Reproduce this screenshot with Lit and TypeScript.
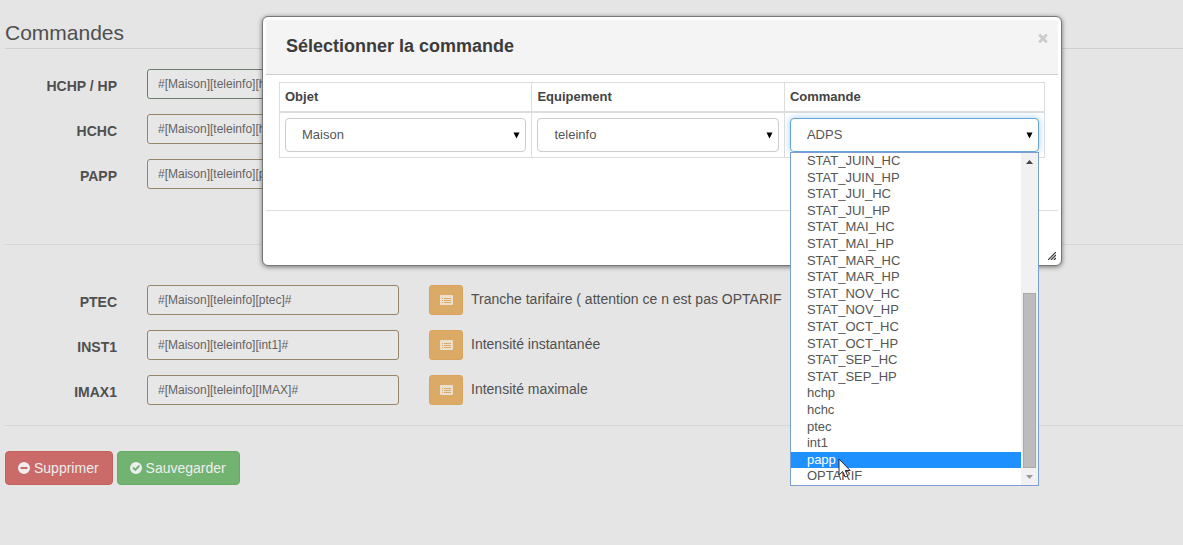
import { LitElement, html, css, svg, nothing } from "lit";
import { customElement, property, state } from "lit/decorators.js";
import { classMap } from "lit/directives/class-map.js";

interface Field {
  id: string;
  label: string;
  value: string;
  tone: string;
  hint: string;
}

const CONSUMPTION: Field[] = [
  { id: "hchp", label: "HCHP / HP", value: "#[Maison][teleinfo][hchp]#", tone: "ok", hint: "" },
  { id: "hchc", label: "HCHC", value: "#[Maison][teleinfo][hchc]#", tone: "warn", hint: "" },
  { id: "papp", label: "PAPP", value: "#[Maison][teleinfo][papp]#", tone: "warn", hint: "" },
];

const TARIFF: Field[] = [
  { id: "ptec", label: "PTEC", value: "#[Maison][teleinfo][ptec]#", tone: "warn", hint: "Tranche tarifaire ( attention ce n est pas OPTARIF" },
  { id: "inst1", label: "INST1", value: "#[Maison][teleinfo][int1]#", tone: "warn", hint: "Intensité instantanée" },
  { id: "imax1", label: "IMAX1", value: "#[Maison][teleinfo][IMAX]#", tone: "warn", hint: "Intensité maximale" },
];

const COMMANDS = [
  "STAT_JUIN_HC", "STAT_JUIN_HP", "STAT_JUI_HC", "STAT_JUI_HP", "STAT_MAI_HC",
  "STAT_MAI_HP", "STAT_MAR_HC", "STAT_MAR_HP", "STAT_NOV_HC", "STAT_NOV_HP",
  "STAT_OCT_HC", "STAT_OCT_HP", "STAT_SEP_HC", "STAT_SEP_HP", "hchp", "hchc",
  "ptec", "int1", "papp", "OPTARIF",
];

const listIcon = svg`<svg class="icon" viewBox="0 0 13 10" width="13" height="10" aria-hidden="true">
  <path fill="currentColor" fill-rule="evenodd" d="M1 0h11q1 0 1 1v8q0 1-1 1H1q-1 0-1-1V1q0-1 1-1zM2 3v1h1V3zM4 3v1h7V3zM2 5v1h1V5zM4 5v1h7V5zM2 7v1h1V7zM4 7v1h7V7z"/>
</svg>`;

const minusIcon = svg`<svg class="icon" viewBox="0 0 12 12" width="12" height="12" aria-hidden="true">
  <path fill="currentColor" fill-rule="evenodd" d="M6 0a6 6 0 1 1 0 12A6 6 0 0 1 6 0zM3 5q-.5 0-.5.5v1q0 .5.5.5h6q.5 0 .5-.5v-1Q9.500 5 9 5z"/>
</svg>`;

const checkIcon = svg`<svg class="icon" viewBox="0 0 12 12" width="12" height="12" aria-hidden="true">
  <path fill="currentColor" fill-rule="evenodd" d="M6 0a6 6 0 1 1 0 12A6 6 0 0 1 6 0zM2.300 6.200 5.300 9.200 10 4.500 8.600 3.100 5.300 6.400 3.700 4.800z"/>
</svg>`;

@customElement("command-row")
export class CommandRow extends LitElement {
  @property({ attribute: false }) field!: Field;

  static styles = css`
    :host { display: block; }
    .row {
      display: grid;
      grid-template-columns: 112px 252px 1fr;
      column-gap: 30px;
    }
    .label {
      padding-top: 7px;
      font-weight: 700;
      line-height: 20px;
      text-align: right;
    }
    .input {
      box-sizing: border-box;
      width: 100%;
      height: 30px;
      padding: 5px 10px;
      border: 1px solid #968567;
      border-radius: 3px;
      background: #e7e7e7;
      color: #636363;
      font: 12px/18px "Liberation Sans", Arial, sans-serif;
    }
    .ok { border-color: #6c7c6c; }
    .extra { display: flex; gap: 8px; }
    .pick {
      display: grid;
      place-items: center;
      width: 34px;
      height: 30px;
      padding: 0;
      border: 1px solid #dba45c;
      border-radius: 3px;
      background: #dcaa67;
      color: #ebe0cf;
    }
    .hint { padding-top: 4px; line-height: 20px; white-space: nowrap; }
  `;

  render() {
    const f = this.field;
    return html`<div class="row">
      <label class="label" for=${f.id}>${f.label}</label>
      <div><input class=${classMap({ input: true, ok: f.tone === "ok" })} id=${f.id} .value=${f.value} /></div>
      ${f.hint
        ? html`<div class="extra">
            <button class="pick" type="button" aria-label="Choisir ${f.label}">${listIcon}</button>
            <span class="hint">${f.hint}</span>
          </div>`
        : nothing}
    </div>`;
  }
}

@customElement("command-dialog")
export class CommandDialog extends LitElement {
  @state() private active = "papp";

  static styles = css`
    :host { display: block; }
    .dialog {
      position: relative;
      padding: 3px 3px 0;
      border: 1px solid #777;
      border-radius: 6px;
      background: #fff;
      box-shadow: 0 1px 5px rgba(0, 0, 0, 0.5);
      color: #444;
    }
    .header {
      display: flex;
      justify-content: space-between;
      padding: 14px 9px 16px 20px;
      border-bottom: 1px solid #ccc;
      background: #f4f4f4;
    }
    .title { margin: 0; font: 700 18px/24px "Liberation Sans", Arial, sans-serif; color: #3c3c3c; }
    .close {
      align-self: flex-start;
      display: grid;
      padding: 0;
      border: 0;
      background: none;
      color: #ccc;
    }
    .body { padding: 7px 13px 52px; }
    .table { width: 100%; border-collapse: collapse; table-layout: fixed; }
    .table th, .table td { box-sizing: border-box; border: 1px solid #ddd; padding: 5px; }
    .table th {
      padding: 4px 5px;
      border-bottom-width: 2px;
      font-size: 13px;
      line-height: 20px;
      text-align: left;
    }
    .table .last { width: 34%; }
    .field { position: relative; }
    .select {
      display: block;
      box-sizing: border-box;
      width: 100%;
      height: 34px;
      padding: 6px 16px;
      border: 1px solid #ccc;
      border-radius: 4px;
      appearance: none;
      background: #fff url("data:image/svg+xml,%3Csvg xmlns='http://www.w3.org/2000/svg' width='7' height='7'%3E%3Cpath d='M.5 .5h6l-3 6z'/%3E%3C/svg%3E") no-repeat right 5px center;
      color: #555;
      font: 13px/20px "Liberation Sans", Arial, sans-serif;
    }
    .open { border-color: #66a3d6; box-shadow: 0 0 7px rgba(102, 175, 233, 0.6); outline: none; }
    .menu {
      position: absolute;
      z-index: 2;
      top: 100%;
      left: 0;
      right: 0;
      display: grid;
      grid-template-columns: 1fr 17px;
      box-sizing: border-box;
      height: 334px;
      border: 1px solid #7b9fd3;
      background: #fff;
    }
    .list {
      display: grid;
      grid-auto-rows: 1fr;
      margin: 0;
      padding: 0;
      list-style: none;
      color: #555;
      font-size: 13px;
      line-height: 16px;
    }
    .option { padding-left: 16px; }
    .active { background: #1e90ff; color: #fff; }
    .scroll {
      display: grid;
      grid-template-rows: 140px 1fr 17px;
      background: #f1f1f1;
    }
    .arrow { justify-self: center; margin-top: 7px; }
    .thumb { margin: 0 2px; border: 1px solid #a9a9a9; background: #bcbcbc; }
    .pointer { position: absolute; left: 47px; top: 305px; }
    .footer { height: 54px; border-top: 1px solid #ddd; }
    .grip { position: absolute; right: 5px; bottom: 5px; }
  `;

  render() {
    return html`<section class="dialog" role="dialog" aria-labelledby="title">
      <header class="header">
        <h2 class="title" id="title">Sélectionner la commande</h2>
        <button class="close" type="button" aria-label="Fermer">
          <svg viewBox="0 0 12 9" width="12" height="9"><path d="M2.200 .5l7.600 8m0-8l-7.600 8" stroke="currentColor" stroke-width="2.800"/></svg>
        </button>
      </header>
      <div class="body">
        <table class="table">
          <thead>
            <tr><th id="h-objet">Objet</th><th id="h-equip">Equipement</th><th class="last" id="h-cmd">Commande</th></tr>
          </thead>
          <tbody>
            <tr>
              <td><select class="select" aria-labelledby="h-objet"><option>Maison</option></select></td>
              <td><select class="select" aria-labelledby="h-equip"><option>teleinfo</option></select></td>
              <td>
                <div class="field">
                  <select class="select open" aria-labelledby="h-cmd"><option>ADPS</option></select>
                  <div class="menu">
                    <ul class="list" role="listbox" aria-labelledby="h-cmd">
                      ${COMMANDS.map((c) => html`<li
                        class=${classMap({ option: true, active: c === this.active })}
                        role="option"
                        aria-selected=${c === this.active}
                        @mouseenter=${() => (this.active = c)}
                      >${c}</li>`)}
                    </ul>
                    <div class="scroll" aria-hidden="true">
                      <svg class="arrow" width="7" height="4"><path d="M0 4l3.500-4L7 4z" fill="#444"/></svg>
                      <div class="thumb"></div>
                      <svg class="arrow" width="7" height="4"><path d="M0 0l3.500 4L7 0z" fill="#999"/></svg>
                    </div>
                    <svg class="pointer" width="13" height="20" aria-hidden="true">
                      <path d="M1 1v16l3.700-3.500 2.500 5.500 2.500-1.200-2.400-5.300h4.900z" fill="#fff" stroke="#223" stroke-width="1"/>
                    </svg>
                  </div>
                </div>
              </td>
            </tr>
          </tbody>
        </table>
      </div>
      <footer class="footer"></footer>
      <svg class="grip" width="8" height="8" aria-hidden="true"><path d="M0 8l8-8M3 8l5-5M6 8l2-2" stroke="#333" stroke-width="1.200"/></svg>
    </section>`;
  }
}

@customElement("app-root")
export class AppRoot extends LitElement {
  static styles = css`
    :host {
      display: block;
      position: relative;
      box-sizing: border-box;
      min-height: 100vh;
      overflow: hidden;
      padding: 20px 0 20px 5px;
      background: #e5e5e5;
      color: #4f4f4f;
      font: 14px/20px "Liberation Sans", Arial, sans-serif;
    }
    .heading {
      margin: 0 0 20px;
      padding-bottom: 2px;
      border-bottom: 1px solid #cfcfcf;
      font: 400 21px/26px "Liberation Sans", Arial, sans-serif;
    }
    .group { display: grid; gap: 15px; }
    .first { margin-bottom: 55px; }
    .rule { margin: 0; border: 0; border-top: 1px solid #d6d6d6; }
    .second { margin: 40px 0 20px; }
    .actions { display: flex; gap: 4px; margin-top: 25px; }
    .btn {
      display: flex;
      align-items: center;
      gap: 4px;
      height: 34px;
      padding: 0 13px 0 12px;
      border: 1px solid;
      border-radius: 4px;
      color: #eee;
      font: 14px/20px "Liberation Sans", Arial, sans-serif;
    }
    .danger { border-color: #c46060; background: #ca6a69; }
    .success { border-color: #65ad65; background: #72b372; }
    .overlay { position: absolute; top: 16px; left: 262px; right: 121px; }
  `;

  render() {
    const rows = (fields: Field[]) => fields.map((f) => html`<command-row .field=${f}></command-row>`);
    return html`
      <form>
        <h1 class="heading">Commandes</h1>
        <div class="group first">${rows(CONSUMPTION)}</div>
        <hr class="rule" />
        <div class="group second">${rows(TARIFF)}</div>
        <hr class="rule" />
        <div class="actions">
          <button class="btn danger" type="button">${minusIcon}Supprimer</button>
          <button class="btn success" type="button">${checkIcon}Sauvegarder</button>
        </div>
      </form>
      <command-dialog class="overlay"></command-dialog>
    `;
  }
}
